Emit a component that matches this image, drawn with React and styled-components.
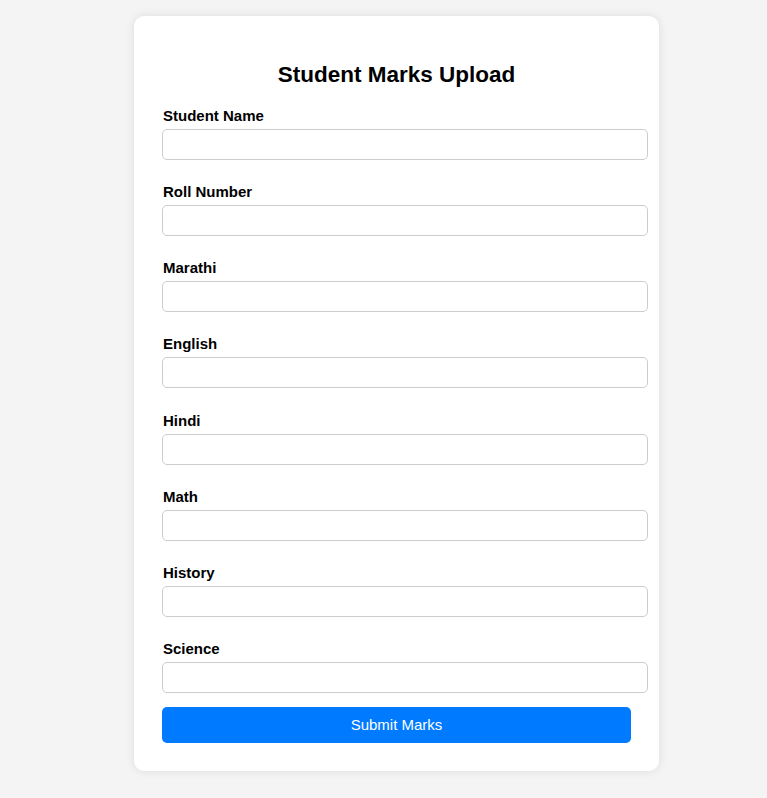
import React from 'react'
import styled, { createGlobalStyle } from 'styled-components'

const GlobalStyle = createGlobalStyle`
  html, body {
    margin: 0;
    padding: 0;
    background: #f4f4f4;
    font-family: 'Liberation Sans', Arial, sans-serif;
  }
`

const Page = styled.div`
  display: flex;
  justify-content: center;
  padding: 16px 0 27px 26px;
`

const Card = styled.div`
  width: 469px;
  padding: 28px;
  background: #fff;
  border-radius: 10px;
  box-shadow: 0 0 10px rgba(0, 0, 0, 0.1);
`

const Title = styled.h2`
  margin: 18px 0 19px;
  font-size: 22.5px;
  line-height: 26px;
  font-weight: bold;
  text-align: center;
  color: #000;
`

const Field = styled.div`
  display: flex;
  flex-direction: column;
  margin-bottom: ${(p) => (p.last ? '14px' : '23.15px')};
`

const Label = styled.label`
  font-size: 15px;
  line-height: 17px;
  font-weight: bold;
  color: #000;
  margin: 0 0 5px 1px;
`

const Input = styled.input`
  width: 100%;
  height: 29px;
  box-sizing: content-box;
  padding: 0 8px 0 7px;
  margin: 0;
  border: 1px solid #ccc;
  border-radius: 5px;
  font-size: 15px;
  font-family: inherit;
  background: #fff;
  outline: none;
`

const Button = styled.button`
  display: block;
  width: 100%;
  height: 36px;
  border: none;
  border-radius: 5px;
  background: #007bff;
  color: #fff;
  font-size: 15px;
  font-family: 'Liberation Sans', Arial, sans-serif;
  cursor: pointer;
`

const subjects = [
  'Student Name',
  'Roll Number',
  'Marathi',
  'English',
  'Hindi',
  'Math',
  'History',
  'Science',
]

const App = () => {
  return (
    <Page>
      <GlobalStyle />
      <Card>
        <Title>Student Marks Upload</Title>
        <form onSubmit={(e) => e.preventDefault()}>
          {subjects.map((s, i) => (
            <Field key={s} last={i === subjects.length - 1}>
              <Label>{s}</Label>
              <Input type='text' />
            </Field>
          ))}
          <Button type='submit'>Submit Marks</Button>
        </form>
      </Card>
    </Page>
  )
}

export default App
